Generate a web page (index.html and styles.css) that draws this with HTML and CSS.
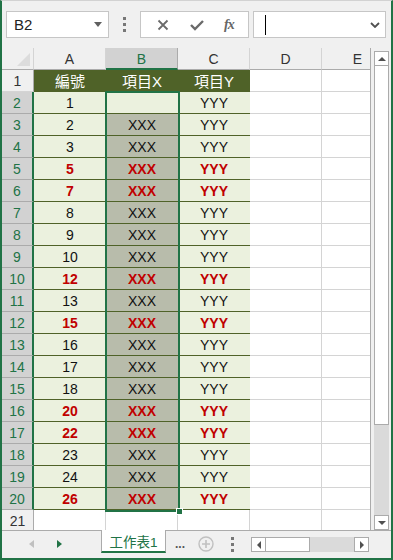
FILE: index.html
```html
<!DOCTYPE html>
<html lang="zh-Hant">
<head>
    <meta charset="UTF-8">
    <meta name="viewport" content="width=device-width, initial-scale=1.0">
    <title>工作表1</title>
    <link rel="stylesheet" href="styles.css">
</head>
<body>
<div class="app">
    <div class="fbar">
        <div class="namebox">
            <span>B2</span>
            <svg class="tri" width="8" height="5" viewBox="0 0 8 5"><path d="M0 0h8L4 5z" fill="#606060"/></svg>
        </div>
        <div class="dots"><i></i><i></i><i></i></div>
        <div class="fxbox">
            <svg width="12" height="12" viewBox="0 0 12 12"><path d="M1.5 1.5l9 9M10.5 1.5l-9 9" stroke="#6a6a6a" stroke-width="1.8"/></svg>
            <svg width="14" height="12" viewBox="0 0 14 12"><path d="M1 6l4 4 8-8" stroke="#6a6a6a" stroke-width="2.4" fill="none"/></svg>
            <span class="fx">fx</span>
        </div>
        <div class="finput">
            <span class="caret"></span>
            <svg class="chev" width="10" height="6" viewBox="0 0 10 6"><path d="M1 1l4 4 4-4" stroke="#505050" stroke-width="1.8" fill="none"/></svg>
        </div>
    </div>

    <div class="sheet">
        <div class="grid">
            <div class="corner"><span></span></div>
            <div class="ch">A</div>
            <div class="ch sel">B</div>
            <div class="ch">C</div>
            <div class="ch">D</div>
            <div class="ch">E</div>

            <div class="rh">1</div>
            <div class="hd">編號</div>
            <div class="hd">項目X</div>
            <div class="hd">項目Y</div>
            <div class="c"></div><div class="c"></div>

            <div class="rh sel">2</div>
            <div class="t">1</div><div class="t active"></div><div class="t">YYY</div>
            <div class="c"></div><div class="c"></div>

            <div class="rh sel">3</div>
            <div class="t">2</div><div class="t x">XXX</div><div class="t">YYY</div>
            <div class="c"></div><div class="c"></div>

            <div class="rh sel">4</div>
            <div class="t">3</div><div class="t x">XXX</div><div class="t">YYY</div>
            <div class="c"></div><div class="c"></div>

            <div class="rh sel">5</div>
            <div class="t red">5</div><div class="t x red">XXX</div><div class="t red">YYY</div>
            <div class="c"></div><div class="c"></div>

            <div class="rh sel">6</div>
            <div class="t red">7</div><div class="t x red">XXX</div><div class="t red">YYY</div>
            <div class="c"></div><div class="c"></div>

            <div class="rh sel">7</div>
            <div class="t">8</div><div class="t x">XXX</div><div class="t">YYY</div>
            <div class="c"></div><div class="c"></div>

            <div class="rh sel">8</div>
            <div class="t">9</div><div class="t x">XXX</div><div class="t">YYY</div>
            <div class="c"></div><div class="c"></div>

            <div class="rh sel">9</div>
            <div class="t">10</div><div class="t x">XXX</div><div class="t">YYY</div>
            <div class="c"></div><div class="c"></div>

            <div class="rh sel">10</div>
            <div class="t red">12</div><div class="t x red">XXX</div><div class="t red">YYY</div>
            <div class="c"></div><div class="c"></div>

            <div class="rh sel">11</div>
            <div class="t">13</div><div class="t x">XXX</div><div class="t">YYY</div>
            <div class="c"></div><div class="c"></div>

            <div class="rh sel">12</div>
            <div class="t red">15</div><div class="t x red">XXX</div><div class="t red">YYY</div>
            <div class="c"></div><div class="c"></div>

            <div class="rh sel">13</div>
            <div class="t">16</div><div class="t x">XXX</div><div class="t">YYY</div>
            <div class="c"></div><div class="c"></div>

            <div class="rh sel">14</div>
            <div class="t">17</div><div class="t x">XXX</div><div class="t">YYY</div>
            <div class="c"></div><div class="c"></div>

            <div class="rh sel">15</div>
            <div class="t">18</div><div class="t x">XXX</div><div class="t">YYY</div>
            <div class="c"></div><div class="c"></div>

            <div class="rh sel">16</div>
            <div class="t red">20</div><div class="t x red">XXX</div><div class="t red">YYY</div>
            <div class="c"></div><div class="c"></div>

            <div class="rh sel">17</div>
            <div class="t red">22</div><div class="t x red">XXX</div><div class="t red">YYY</div>
            <div class="c"></div><div class="c"></div>

            <div class="rh sel">18</div>
            <div class="t">23</div><div class="t x">XXX</div><div class="t">YYY</div>
            <div class="c"></div><div class="c"></div>

            <div class="rh sel">19</div>
            <div class="t">24</div><div class="t x">XXX</div><div class="t">YYY</div>
            <div class="c"></div><div class="c"></div>

            <div class="rh sel">20</div>
            <div class="t red">26</div><div class="t x red">XXX</div><div class="t red">YYY</div>
            <div class="c"></div><div class="c"></div>

            <div class="rh">21</div>
            <div class="c"></div><div class="c"></div><div class="c"></div>
            <div class="c"></div><div class="c"></div>

            <!-- selection range B2:B20 -->
            <div class="selbox"><span class="handle"></span></div>
        </div>

        <div class="vscroll">
            <div class="sbtn"><svg width="8" height="4" viewBox="0 0 8 4"><path d="M0 4h8L4 0z" fill="#505050"/></svg></div>
            <div class="vthumb"></div>
            <div class="vtrack"></div>
            <div class="sbtn"><svg width="8" height="4" viewBox="0 0 8 4"><path d="M0 0h8L4 4z" fill="#505050"/></svg></div>
        </div>
    </div>

    <div class="tabbar">
        <div class="nav">
            <svg width="5" height="8" viewBox="0 0 5 8"><path d="M5 0v8L0 4z" fill="#c0c0c0"/></svg>
            <svg width="5" height="8" viewBox="0 0 5 8"><path d="M0 0v8L5 4z" fill="#217346"/></svg>
        </div>
        <div class="tab">工作表1</div>
        <div class="more">...</div>
        <svg class="plus" width="16" height="16" viewBox="0 0 16 16"><circle cx="8" cy="8" r="7" fill="none" stroke="#c0c0c0" stroke-width="1.4"/><path d="M8 4v8M4 8h8" stroke="#c0c0c0" stroke-width="1.6"/></svg>
        <div class="vdots"><i></i><i></i><i></i></div>
        <div class="hscroll">
            <div class="hbtn"><svg width="4" height="8" viewBox="0 0 4 8"><path d="M4 0v8L0 4z" fill="#505050"/></svg></div>
            <div class="hthumb"></div>
            <div class="htrack"></div>
            <div class="hbtn"><svg width="4" height="8" viewBox="0 0 4 8"><path d="M0 0v8L4 4z" fill="#505050"/></svg></div>
        </div>
    </div>
</div>
</body>
</html>
```

FILE: styles.css
```css
body{
    margin: 0;
    font-family: "Liberation Sans", Arial, sans-serif;
}
.app{
    width: 393px;
    height: 560px;
    box-sizing: border-box;
    border: 2px solid #217346;
    border-top: 1px solid #d2d2d2;
    background-color: #f0f0f0;
    display: flex;
    flex-direction: column;
    overflow: hidden;
}

/* formula bar */
.fbar{
    height: 47px;
    flex: none;
    box-sizing: border-box;
    display: flex;
    align-items: flex-start;
    padding: 10px 3px 0 4px;
}
.namebox{
    width: 103px;
    height: 27px;
    box-sizing: border-box;
    border: 1px solid #c6c6c6;
    background-color: #fff;
    display: flex;
    align-items: center;
    justify-content: space-between;
    padding: 0 6px 0 7px;
    font-size: 15px;
    color: #222;
}
.dots{
    width: 31px;
    height: 27px;
    display: flex;
    flex-direction: column;
    align-items: center;
    justify-content: center;
    gap: 3px;
}
.dots i, .vdots i{
    display: block;
    width: 3px;
    height: 3px;
    background-color: #777;
}
.fxbox{
    width: 109px;
    height: 27px;
    box-sizing: border-box;
    border: 1px solid #c6c6c6;
    background-color: #fff;
    display: flex;
    align-items: center;
    justify-content: space-around;
    padding: 0 4px 0 6px;
}
.fx{
    font-family: "Liberation Serif", serif;
    font-style: italic;
    font-weight: bold;
    font-size: 14px;
    color: #666;
    letter-spacing: -1px;
}
.finput{
    width: 133px;
    height: 27px;
    margin-left: 4px;
    box-sizing: border-box;
    border: 1px solid #c6c6c6;
    background-color: #fff;
    display: flex;
    align-items: center;
    justify-content: space-between;
    padding: 0 5px 0 11px;
}
.caret{
    width: 1px;
    height: 20px;
    background-color: #000;
}

/* sheet */
.sheet{
    height: 482px;
    flex: none;
    display: flex;
}
.grid{
    position: relative;
    width: 368px;
    flex: none;
    display: grid;
    grid-template-columns: 32px 72px 72px 72px 72px 72px;
    grid-auto-rows: 22px;
    overflow: hidden;
    background-color: #fff;
    border-right: 1px solid #ababab;
    font-size: 14px;
}
.grid > div{
    box-sizing: border-box;
    display: flex;
    align-items: center;
    justify-content: center;
}
.corner{
    background-color: #f0f0f0;
    border-right: 1px solid #d4d4d4;
    border-bottom: 1px solid #ababab;
    position: relative;
}
.corner span{
    position: absolute;
    right: 3px;
    bottom: 3px;
    width: 0;
    height: 0;
    border-left: 13px solid transparent;
    border-bottom: 13px solid #dcdcdc;
}
.ch{
    background-color: #f0f0f0;
    border-right: 1px solid #d4d4d4;
    border-bottom: 1px solid #ababab;
    color: #333;
    padding-top: 1px;
}
.ch.sel{
    background-color: #d2d2d2;
    color: #217346;
    border-bottom: 2px solid #217346;
    border-right-color: #ababab;
}
.rh{
    background-color: #f0f0f0;
    border-right: 1px solid #ababab;
    border-bottom: 1px solid #d4d4d4;
    color: #333;
}
.rh.sel{
    background-color: #d2d2d2;
    color: #217346;
    border-right: 2px solid #217346;
    border-bottom-color: #ababab;
}
.hd{
    background-color: #4f6228;
    color: #fff;
    font-family: "Liberation Sans", "Noto Sans CJK TC", sans-serif;
    font-size: 15px;
    border-bottom: 1px solid #4f6228;
}
.t{
    background-color: #ebf1de;
    border-bottom: 1px solid #4f6228;
    color: #111;
}
.t.x{
    background-color: #b8bcab;
}
.red{
    color: #c00000;
    font-weight: bold;
}
.c{
    border-right: 1px solid #d4d4d4;
    border-bottom: 1px solid #d4d4d4;
}
.selbox{
    position: absolute;
    left: 103px;
    top: 43px;
    width: 75px;
    height: 421px;
    box-sizing: border-box;
    border: 2px solid #217346;
}
.handle{
    position: absolute;
    right: -5px;
    bottom: -5px;
    width: 5px;
    height: 5px;
    background-color: #217346;
    border: 1px solid #fff;
}

/* vertical scrollbar */
.vscroll{
    width: 20px;
    box-sizing: border-box;
    padding: 3px 2px 0 3px;
    display: flex;
    flex-direction: column;
}
.sbtn{
    height: 15px;
    flex: none;
    box-sizing: border-box;
    border: 1px solid #ababab;
    background-color: #fff;
    display: flex;
    align-items: center;
    justify-content: center;
}
.vthumb{
    height: 359px;
    box-sizing: border-box;
    border: 1px solid #ababab;
    border-top: none;
    background-color: #fff;
}
.vtrack{
    flex: 1;
    background-color: #dadada;
}

/* sheet tabs */
.tabbar{
    flex: 1;
    display: flex;
    align-items: flex-start;
    border-top: 1px solid #ababab;
    position: relative;
}
.nav{
    width: 99px;
    height: 26px;
    display: flex;
    align-items: center;
    gap: 23px;
    padding-left: 27px;
    box-sizing: border-box;
}
.tab{
    width: 65px;
    height: 23px;
    margin-top: -1px;
    box-sizing: border-box;
    background-color: #fff;
    border-left: 1px solid #ababab;
    border-right: 1px solid #ababab;
    border-bottom: 2px solid #217346;
    color: #217346;
    font-family: "Liberation Sans", "Noto Sans CJK TC", sans-serif;
    font-size: 13.5px;
    display: flex;
    align-items: center;
    justify-content: center;
}
.more{
    width: 28px;
    text-align: center;
    color: #555;
    font-size: 12px;
    font-weight: bold;
    line-height: 22px;
    padding-top: 2px;
}
.plus{
    margin-top: 5px;
    margin-left: 4px;
}
.vdots{
    width: 37px;
    height: 26px;
    display: flex;
    flex-direction: column;
    align-items: center;
    justify-content: center;
    gap: 3px;
}
.hscroll{
    width: 118px;
    height: 15px;
    margin-top: 6px;
    display: flex;
}
.hbtn{
    width: 15px;
    flex: none;
    box-sizing: border-box;
    border: 1px solid #ababab;
    background-color: #fff;
    display: flex;
    align-items: center;
    justify-content: center;
}
.hthumb{
    width: 44px;
    box-sizing: border-box;
    border: 1px solid #ababab;
    border-left: none;
    background-color: #fff;
}
.htrack{
    flex: 1;
    background-color: #dadada;
}
```
